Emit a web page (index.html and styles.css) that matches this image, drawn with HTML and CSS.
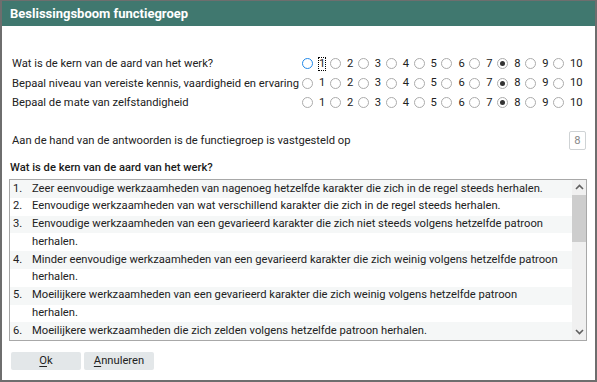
FILE: index.html
```html
<!DOCTYPE html>
<html>
<head>
<meta charset="utf-8">
<link rel="stylesheet" href="styles.css">
</head>
<body>
<div class="window">
  <div class="titlebar">Beslissingsboom functiegroep</div>
  <div class="content">
    <div class="questions">
      <div class="qrow">
        <div class="qlabel">Wat is de kern van de aard van het werk?</div>
        <div class="options">
          <span class="opt"><span class="radio focus"></span><span class="num focusrect">1</span></span>
          <span class="opt"><span class="radio"></span><span class="num">2</span></span>
          <span class="opt"><span class="radio"></span><span class="num">3</span></span>
          <span class="opt"><span class="radio"></span><span class="num">4</span></span>
          <span class="opt"><span class="radio"></span><span class="num">5</span></span>
          <span class="opt"><span class="radio"></span><span class="num">6</span></span>
          <span class="opt"><span class="radio"></span><span class="num">7</span></span>
          <span class="opt"><span class="radio checked"></span><span class="num">8</span></span>
          <span class="opt"><span class="radio"></span><span class="num">9</span></span>
          <span class="opt"><span class="radio"></span><span class="num">10</span></span>
        </div>
      </div>
      <div class="qrow">
        <div class="qlabel">Bepaal niveau van vereiste kennis, vaardigheid en ervaring</div>
        <div class="options">
          <span class="opt"><span class="radio"></span><span class="num">1</span></span>
          <span class="opt"><span class="radio"></span><span class="num">2</span></span>
          <span class="opt"><span class="radio"></span><span class="num">3</span></span>
          <span class="opt"><span class="radio"></span><span class="num">4</span></span>
          <span class="opt"><span class="radio"></span><span class="num">5</span></span>
          <span class="opt"><span class="radio"></span><span class="num">6</span></span>
          <span class="opt"><span class="radio"></span><span class="num">7</span></span>
          <span class="opt"><span class="radio checked"></span><span class="num">8</span></span>
          <span class="opt"><span class="radio"></span><span class="num">9</span></span>
          <span class="opt"><span class="radio"></span><span class="num">10</span></span>
        </div>
      </div>
      <div class="qrow">
        <div class="qlabel">Bepaal de mate van zelfstandigheid</div>
        <div class="options">
          <span class="opt"><span class="radio"></span><span class="num">1</span></span>
          <span class="opt"><span class="radio"></span><span class="num">2</span></span>
          <span class="opt"><span class="radio"></span><span class="num">3</span></span>
          <span class="opt"><span class="radio"></span><span class="num">4</span></span>
          <span class="opt"><span class="radio"></span><span class="num">5</span></span>
          <span class="opt"><span class="radio"></span><span class="num">6</span></span>
          <span class="opt"><span class="radio"></span><span class="num">7</span></span>
          <span class="opt"><span class="radio checked"></span><span class="num">8</span></span>
          <span class="opt"><span class="radio"></span><span class="num">9</span></span>
          <span class="opt"><span class="radio"></span><span class="num">10</span></span>
        </div>
      </div>
    </div>
    <div class="result">
      <span class="rlabel">Aan de hand van de antwoorden is de functiegroep is vastgesteld op</span>
      <span class="rbox">8</span>
    </div>
    <div class="heading">Wat is de kern van de aard van het werk?</div>
    <div class="listbox">
      <div class="items">
        <div class="item"><span class="inum">1.</span><span class="itext">Zeer eenvoudige werkzaamheden van nagenoeg hetzelfde karakter die zich in de regel steeds herhalen.</span></div>
        <div class="item"><span class="inum">2.</span><span class="itext">Eenvoudige werkzaamheden van wat verschillend karakter die zich in de regel steeds herhalen.</span></div>
        <div class="item"><span class="inum">3.</span><span class="itext">Eenvoudige werkzaamheden van een gevarieerd karakter die zich niet steeds volgens hetzelfde patroon herhalen.</span></div>
        <div class="item"><span class="inum">4.</span><span class="itext">Minder eenvoudige werkzaamheden van een gevarieerd karakter die zich weinig volgens hetzelfde patroon herhalen.</span></div>
        <div class="item"><span class="inum">5.</span><span class="itext">Moeilijkere werkzaamheden van een gevarieerd karakter die zich weinig volgens hetzelfde patroon herhalen.</span></div>
        <div class="item"><span class="inum">6.</span><span class="itext">Moeilijkere werkzaamheden die zich zelden volgens hetzelfde patroon herhalen.</span></div>
      </div>
      <div class="scrollbar">
        <div class="sbtn"><svg width="9" height="6" viewBox="0 0 9 6"><path d="M1 5 L4.5 1.5 L8 5" fill="none" stroke="#606060" stroke-width="1.6"/></svg></div>
        <div class="track"><div class="thumb"></div></div>
        <div class="sbtn"><svg width="9" height="6" viewBox="0 0 9 6"><path d="M1 1 L4.5 4.5 L8 1" fill="none" stroke="#606060" stroke-width="1.6"/></svg></div>
      </div>
    </div>
    <div class="buttons">
      <button class="btn"><span class="blabel"><u>O</u>k</span></button>
      <button class="btn"><span class="blabel"><u>A</u>nnuleren</span></button>
    </div>
  </div>
</div>
</body>
</html>
```
FILE: styles.css
```css
html, body {
  margin: 0;
  padding: 0;
  background: #fff;
}
body {
  font-family: Roboto, "Liberation Sans", sans-serif;
  font-size: 11.2px;
  color: #222;
}
.window {
  width: 597px;
  height: 382px;
  box-sizing: border-box;
  border: 2px solid #6e6e6e;
  border-top: 1px solid #6e6e6e;
  background: #fff;
  display: flex;
  flex-direction: column;
}
.titlebar {
  height: 25px;
  background: #40786f;
  color: #fff;
  font-weight: bold;
  font-size: 13px;
  line-height: 25px;
  padding-left: 8px;
  flex: none;
}
.content {
  padding: 0 8px 0 7px;
  display: flex;
  flex-direction: column;
}
.questions {
  margin-top: 28px;
  padding-left: 3px;
}
.qrow {
  display: flex;
  align-items: center;
  height: 19.5px;
}
.qlabel {
  width: 290px;
  flex: none;
  white-space: nowrap;
}
.options {
  display: flex;
  align-items: center;
}
.opt {
  width: 27.9px;
  display: flex;
  align-items: center;
  flex: none;
}
.radio {
  width: 11px;
  height: 11px;
  box-sizing: border-box;
  border: 1px solid #ababab;
  border-radius: 50%;
  background: #fff;
  display: flex;
  align-items: center;
  justify-content: center;
  flex: none;
}
.radio.focus {
  border: 1.6px solid #2188e8;
}
.radio.checked::after {
  content: "";
  width: 5px;
  height: 5px;
  border-radius: 50%;
  background: #333;
}
.num {
  margin-left: 6px;
  line-height: 12px;
  white-space: nowrap;
}
.num.focusrect {
  outline: 1px dotted #000;
  outline-offset: 0;
}
.result {
  margin-top: 18px;
  height: 19px;
  display: flex;
  align-items: center;
  justify-content: space-between;
  padding-left: 3px;
}
.rbox {
  width: 17px;
  height: 19px;
  box-sizing: border-box;
  border: 1px solid #cfd3d5;
  border-radius: 2px;
  color: #888;
  display: flex;
  align-items: center;
  justify-content: center;
  margin-right: 1px;
}
.heading {
  margin-top: 10px;
  line-height: 16px;
  font-weight: 500;
  color: #1a1a1a;
  padding-left: 1px;
}
.listbox {
  margin-top: 3px;
  height: 162px;
  width: 578px;
  box-sizing: border-box;
  border: 1px solid #a8a8a8;
  display: flex;
}
.items {
  flex: 1;
  overflow: hidden;
  line-height: 17.8px;
  background: repeating-linear-gradient(#f5f7f7 0 17.8px, #fff 17.8px 35.6px);
}
.item {
  display: flex;
  padding-left: 3px;
}
.inum {
  width: 19px;
  flex: none;
}
.itext {
  flex: 1;
  padding-right: 8px;
}
.scrollbar {
  width: 14px;
  flex: none;
  background: #f0f0f0;
  display: flex;
  flex-direction: column;
}
.sbtn {
  height: 15px;
  display: flex;
  align-items: center;
  justify-content: center;
  flex: none;
}
.track {
  flex: 1;
}
.thumb {
  height: 47px;
  background: #cdcdcd;
}
.buttons {
  margin-top: 11px;
  display: flex;
  gap: 3px;
  padding-left: 2px;
}
.btn {
  width: 70px;
  height: 18px;
  border: none;
  border-radius: 2px;
  background: #e3e7e9;
  font-family: Roboto, "Liberation Sans", sans-serif;
  font-size: 11.2px;
  color: #222;
  padding: 0;
  display: flex;
  align-items: center;
  justify-content: center;
}
.blabel {
  line-height: 14px;
}
.btn u {
  text-decoration-thickness: 1px;
  text-underline-offset: 2px;
}
```
